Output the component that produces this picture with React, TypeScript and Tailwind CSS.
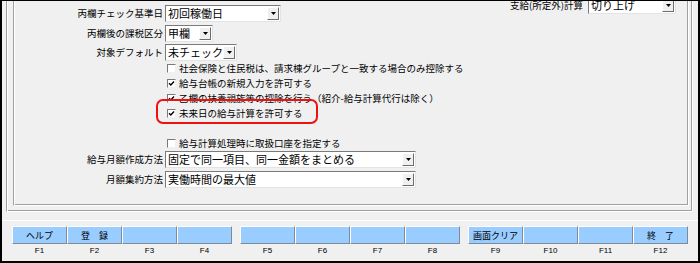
import React from 'react';

// 設定画面（給与計算の設定タブ）

function Combo({ value, className }: { value: string; className: string }) {
  return (
    <div
      className={`flex h-[17px] shrink-0 border border-t-[#7a7a7a] border-l-[#7a7a7a] border-r-[#e3e3e3] border-b-[#e3e3e3] bg-white ${className}`}
    >
      <span className="flex-1 overflow-hidden whitespace-nowrap pl-[2px] text-[11px] leading-[15px] text-black">
        {value}
      </span>
      <span className="my-[1px] mr-[1px] flex w-[12px] items-center justify-center border border-t-white border-l-white border-r-[#6d6d6d] border-b-[#6d6d6d] bg-[#f0f0f0]">
        <svg width="5" height="3" viewBox="0 0 5 3">
          <path d="M0 0h5L2.5 3z" fill="#000" />
        </svg>
      </span>
    </div>
  );
}

function FieldRow({
  label,
  value,
  comboClass,
  className = '',
}: {
  label: string;
  value: string;
  comboClass: string;
  className?: string;
}) {
  return (
    <div className={`flex items-center ${className}`}>
      <span className="w-[149px] whitespace-nowrap text-right text-[9.5px]">{label}</span>
      <Combo value={value} className={`ml-[2px] ${comboClass}`} />
    </div>
  );
}

function Check({ label, checked }: { label: string; checked: boolean }) {
  return (
    <div className="flex h-[15px] items-center pl-[153px]">
      <span className="flex h-[9px] w-[9px] items-center justify-center border border-t-[#7a7a7a] border-l-[#7a7a7a] border-r-[#f0f0f0] border-b-[#f0f0f0] bg-white">
        {checked && (
          <svg width="7" height="7" viewBox="0 0 7 7">
            <path d="M1 3.2l1.8 1.8L6 1.5" stroke="#000" strokeWidth="1.4" fill="none" />
          </svg>
        )}
      </span>
      <span className="ml-[3px] whitespace-nowrap text-[9.5px]">{label}</span>
    </div>
  );
}

const fkeys = [
  ['ヘルプ', '登　録', '', ''],
  ['', '', '', ''],
  ['画面クリア', '', '', '終　了'],
];

export default function App() {
  return (
    <div className="relative h-[263px] w-[700px] overflow-hidden border-t border-l-2 border-r-2 border-b-2 border-black bg-[#f0f0f0] font-['Noto_Sans_CJK_JP',sans-serif] text-black">
      {/* 外枠 */}
      <div className="ml-[4px] h-[211px] w-[687px] border-l border-r border-b border-l-[#a0a0a0] border-r-white border-b-white shadow-[inset_1px_0_0_#fff,inset_-1px_0_0_#a0a0a0,inset_0_-1px_0_#a0a0a0]">
        {/* 内枠 */}
        <div className="ml-[6px] flex h-[205px] w-[676px] border-l border-r border-b border-l-[#a0a0a0] border-r-white border-b-white shadow-[inset_1px_0_0_#fff,inset_-1px_0_0_#a0a0a0,inset_0_-1px_0_#a0a0a0]">
          <div className="flex flex-col">
            <FieldRow className="mt-[4px]" label="丙欄チェック基準日" value="初回稼働日" comboClass="w-[116px]" />
            <FieldRow className="mt-[3px]" label="丙欄後の課税区分" value="甲欄" comboClass="w-[48px]" />
            <FieldRow className="mt-[2px]" label="対象デフォルト" value="未チェック" comboClass="w-[72px]" />
            <Check checked={false} label="社会保険と住民税は、請求棟グループと一致する場合のみ控除する" />
            <Check checked label="給与台帳の新規入力を許可する" />
            <Check checked label="乙欄の扶養親族等の控除を行う（紹介-給与計算代行は除く）" />
            <Check checked label="未来日の給与計算を許可する" />
            <div className="h-[15px]" />
            <Check checked={false} label="給与計算処理時に取扱口座を指定する" />
            <FieldRow label="給与月額作成方法" value="固定で同一項目、同一金額をまとめる" comboClass="w-[251px]" />
            <FieldRow className="mt-[3px]" label="月額集約方法" value="実働時間の最大値" comboClass="w-[251px]" />
          </div>
          <div className="ml-auto mr-[12px] -mt-[4px] flex h-[17px] items-center">
            <span className="mr-[5px] whitespace-nowrap text-[9.5px]">支給(所定外)計算</span>
            <Combo value="切り上げ" className="w-[88px]" />
          </div>
        </div>
      </div>

      {/* ファンクションキー */}
      <div className="mt-[8px] border-t border-white pt-[5px]">
        <div className="ml-[10px] flex gap-[8px]">
          {fkeys.map((group, gi) => (
            <div key={gi} className="flex">
              {group.map((text, i) => {
                const n = gi * 4 + i + 1;
                return (
                  <div key={n} className="flex w-[55px] flex-col">
                    <div className="flex h-[18px] items-center justify-center border border-t-white border-l-white border-r-[#7f8a99] border-b-[#7f8a99] bg-[#99ccff] text-[9px] leading-none">
                      {text}
                    </div>
                    <div className="mt-[1px] text-center font-['Liberation_Sans',sans-serif] text-[8px] leading-[12px]">
                      F{n}
                    </div>
                  </div>
                );
              })}
            </div>
          ))}
        </div>
      </div>

      {/* 注目枠 */}
      <div className="absolute left-[154px] top-[98px] h-[25px] w-[162px] rounded-[7px] border-[2.5px] border-[#ee1111]" />
    </div>
  );
}
